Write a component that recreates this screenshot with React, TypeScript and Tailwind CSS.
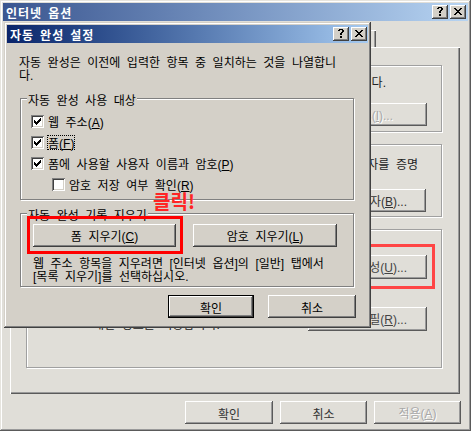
import React from "react";

const HANGUL = /[\u1100-\u11FF\u3130-\u318F\uAC00-\uD7A3]/;
type Seg = { t: string; kind: "h" | "s" | "l"; u: boolean };

function parse(text: string): Seg[] {
  const segs: Seg[] = [];
  let under = false;
  for (const ch of Array.from(text)) {
    if (ch === "&" && !under) {
      under = true;
      continue;
    }
    const kind: Seg["kind"] = ch === " " ? "s" : HANGUL.test(ch) ? "h" : "l";
    const last = segs[segs.length - 1];
    if (!under && last && last.kind === kind && !last.u) last.t += ch;
    else segs.push({ t: ch, kind, u: under });
    under = false;
  }
  return segs;
}

function KT({ s, bold = false }: { s: string; bold?: boolean }) {
  return (
    <span className="whitespace-nowrap">
      {parse(s).map((g, i) => {
        if (g.kind === "s")
          return <span key={i} className={bold ? "inline-block w-[6px]" : "inline-block w-[6.5px]"} />;
        const u = g.u ? " underline underline-offset-[1px] decoration-1" : "";
        if (g.kind === "h")
          return (
            <span
              key={i}
              className={(bold ? "font-bold text-[12px] tracking-[1px]" : "text-[12px]") + " font-['Noto_Sans_CJK_KR']" + u}
            >
              {g.t}
            </span>
          );
        return (
          <span key={i} className={(bold ? "font-bold " : "") + "text-[12px] font-['Liberation_Sans']" + u}>
            {g.t}
          </span>
        );
      })}
    </span>
  );
}

function Bits({ rows, color = "#000", className = "" }: { rows: string[]; color?: string; className?: string }) {
  const w = rows[0].length;
  const h = rows.length;
  const rects: React.ReactElement[] = [];
  rows.forEach((r, y) =>
    Array.from(r).forEach((c, x) => {
      if (c === "#") rects.push(<rect key={`${x}-${y}`} x={x} y={y} width={1} height={1} />);
    })
  );
  return (
    <svg width={w} height={h} viewBox={`0 0 ${w} ${h}`} fill={color} shapeRendering="crispEdges" className={className}>
      {rects}
    </svg>
  );
}

const CLOSE = ["##....##", ".##..##.", "..####..", "...##...", "..####..", ".##..##.", "##....##"];
const HELP = [".####.", "##..##", "....##", "...##.", "..##..", "..##..", "......", "..##..", "..##.."];
const CHECK = ["......#", ".....##", "#...###", "##.###.", "#####..", ".###...", "..#...."];

function CapBtn({ kind }: { kind: "help" | "close" }) {
  return (
    <div className="w-[16px] h-[14px] bg-[#d4d0c8] shadow-[inset_-1px_-1px_0_#404040,inset_1px_1px_0_#ffffff,inset_-2px_-2px_0_#808080] flex items-start">
      {kind === "close" ? (
        <Bits rows={CLOSE} className="block ml-[4px] mt-[3px]" />
      ) : (
        <Bits rows={HELP} className="block ml-[5px] mt-[2px]" />
      )}
    </div>
  );
}

function Check({ checked }: { checked: boolean }) {
  return (
    <div className="w-[13px] h-[13px] shrink-0 bg-white shadow-[inset_1px_1px_0_#808080,inset_-1px_-1px_0_#ffffff,inset_2px_2px_0_#404040,inset_-2px_-2px_0_#d4d0c8] flex items-start">
      {checked && <Bits rows={CHECK} className="block ml-[3px] mt-[3px]" />}
    </div>
  );
}

function Line({ s, className = "" }: { s: string; className?: string }) {
  return (
    <div className={"h-[13px] leading-[13px] whitespace-nowrap " + className}>
      <KT s={s} />
    </div>
  );
}

export default function App() {
  return (
    <div className="w-[471px] h-[431px] overflow-hidden font-['Noto_Sans_CJK_KR',sans-serif] text-black">
      {/* Background window: 인터넷 옵션 */}
      <div className="relative w-[471px] h-[431px] bg-[#e0ded8] p-[3px] flex flex-col shadow-[inset_-1px_-1px_0_#5a5a5a,inset_1px_1px_0_#e6e4de,inset_-2px_-2px_0_#9a9a9a,inset_2px_2px_0_#ffffff]">
        <div className="h-[18px] shrink-0 flex items-center pl-[3px] pr-[2px] bg-linear-to-r from-[#3b5690] to-[#b7d4f2]">
          <span className="text-white leading-[18px]">
            <KT s="인터넷 옵션" bold />
          </span>
          <div className="ml-auto flex gap-[2px]">
            <CapBtn kind="help" />
            <CapBtn kind="close" />
          </div>
        </div>

        {/* tab row */}
        <div className="h-[26px] shrink-0 flex items-start">
          <div className="ml-[297px] mt-[9px] w-[76px] h-[17px] shadow-[inset_1px_1px_0_#ffffff,inset_-1px_0_0_#5a5a5a,inset_-2px_0_0_#9a9a9a]" />
        </div>

        {/* tab page */}
        <div className="ml-[7px] w-[450px] h-[347px] shrink-0 pt-[18px] pl-[16px] flex flex-col shadow-[inset_1px_1px_0_#ffffff,inset_-1px_-1px_0_#5a5a5a,inset_-2px_-2px_0_#9a9a9a]">
          {/* G1 */}
          <div className="w-[416px] h-[67px] border border-[#a0a0a0] shadow-[inset_1px_1px_0_#ffffff,1px_1px_0_#ffffff] flex flex-col items-end">
            <Line s="제어할 수 있습니다." className="mt-[8px] mr-[55px] text-[#222]" />
            <div className="mt-[16px] mr-[14px] w-[119px] h-[23px] flex items-center justify-end pr-[34px] shadow-[inset_-1px_-1px_0_#5a5a5a,inset_1px_1px_0_#ffffff,inset_-2px_-2px_0_#9a9a9a] text-[#a8a8a8] [text-shadow:1px_1px_0_#ffffff] leading-[13px]">
              <KT s="설정(&I)..." />
            </div>
          </div>
          {/* G2 */}
          <div className="mt-[12px] w-[416px] h-[73px] border border-[#a0a0a0] shadow-[inset_1px_1px_0_#ffffff,1px_1px_0_#ffffff] flex flex-col items-end">
            <Line s="게시자를 증명" className="mt-[11px] mr-[23px] text-[#222]" />
            <div className="mt-[20px] mr-[15px] w-[119px] h-[23px] flex items-center justify-end pr-[19px] shadow-[inset_-1px_-1px_0_#5a5a5a,inset_1px_1px_0_#ffffff,inset_-2px_-2px_0_#9a9a9a] text-[#333] leading-[13px]">
              <KT s="게시자(&B)..." />
            </div>
          </div>
          {/* G3 */}
          <div className="mt-[12px] w-[416px] h-[139px] border border-[#a0a0a0] shadow-[inset_1px_1px_0_#ffffff,1px_1px_0_#ffffff] flex flex-col items-end">
            <div className="mt-[25px] mr-[14px] w-[119px] h-[24px] flex items-center justify-end pr-[20px] shadow-[inset_-1px_-1px_0_#5a5a5a,inset_1px_1px_0_#ffffff,inset_-2px_-2px_0_#9a9a9a] text-[#444] leading-[13px]">
              <KT s="완성(&U)..." />
            </div>
            <div className="mt-[28px] w-full flex items-end">
              <Line s="개인 정보를 저장합니다." className="ml-[66px] mb-[2px] text-[#222]" />
              <div className="ml-auto mr-[14px] w-[119px] h-[24px] flex items-center justify-end pr-[20px] shadow-[inset_-1px_-1px_0_#5a5a5a,inset_1px_1px_0_#ffffff,inset_-2px_-2px_0_#9a9a9a] text-[#444] leading-[13px]">
                <KT s="프로필(&R)..." />
              </div>
            </div>
          </div>
        </div>

        {/* bottom buttons */}
        <div className="mt-[7px] pr-[7px] flex justify-end gap-[7px]">
          <div className="w-[88px] h-[23px] flex items-center justify-center shadow-[inset_-1px_-1px_0_#5a5a5a,inset_1px_1px_0_#ffffff,inset_-2px_-2px_0_#9a9a9a] text-[#333] leading-[13px]">
            <KT s="확인" />
          </div>
          <div className="w-[87px] h-[23px] flex items-center justify-center shadow-[inset_-1px_-1px_0_#5a5a5a,inset_1px_1px_0_#ffffff,inset_-2px_-2px_0_#9a9a9a] text-[#333] leading-[13px]">
            <KT s="취소" />
          </div>
          <div className="w-[87px] h-[23px] flex items-center justify-center shadow-[inset_-1px_-1px_0_#5a5a5a,inset_1px_1px_0_#ffffff,inset_-2px_-2px_0_#9a9a9a] text-[#a8a8a8] [text-shadow:1px_1px_0_#ffffff] leading-[13px]">
            <KT s="적용(&A)" />
          </div>
        </div>

        {/* annotation on background window */}
        <div className="absolute left-[340px] top-[244px] w-[95px] h-[45px] border-[3px] border-[#ff4545]" />

        {/* Dialog: 자동 완성 설정 */}
        <div className="absolute left-[4px] top-[22px] z-10 w-[367px] h-[306px] bg-[#d4d0c8] p-[3px] flex flex-col shadow-[inset_-1px_-1px_0_#404040,inset_1px_1px_0_#d4d0c8,inset_-2px_-2px_0_#808080,inset_2px_2px_0_#ffffff]">
          <div className="h-[18px] shrink-0 flex items-center pl-[3px] pr-[1px] bg-linear-to-r from-[#0a246a] to-[#a6caf0]">
            <span className="text-white leading-[18px]">
              <KT s="자동 완성 설정" bold />
            </span>
            <div className="ml-auto flex gap-[2px]">
              <CapBtn kind="help" />
              <CapBtn kind="close" />
            </div>
          </div>

          <div className="mt-[11px] pl-[12px]">
            <Line s="자동 완성은 이전에 입력한 항목 중 일치하는 것을 나열합니" />
            <Line s="다." />
          </div>

          {/* group 1 */}
          <div className="relative mt-[18px] ml-[13px] w-[334px] h-[102px] shrink-0 border border-[#808080] shadow-[inset_1px_1px_0_#ffffff,1px_1px_0_#ffffff] pt-[16px] pl-[10px] flex flex-col gap-[8px]">
            <span className="absolute left-[6px] top-[-7px] px-[1px] bg-[#d4d0c8] leading-[13px]">
              <KT s="자동 완성 사용 대상" />
            </span>
            <div className="h-[13px] flex items-center gap-[4px] leading-[13px]">
              <Check checked />
              <KT s="웹 주소(&A)" />
            </div>
            <div className="h-[13px] flex items-center gap-[3px] leading-[13px]">
              <Check checked />
              <span className="h-[15px] flex items-center border border-dotted border-black">
                <KT s="폼(&F)" />
              </span>
            </div>
            <div className="h-[13px] flex items-center gap-[4px] leading-[13px]">
              <Check checked />
              <KT s="폼에 사용할 사용자 이름과 암호(&P)" />
            </div>
            <div className="h-[13px] ml-[21px] flex items-center gap-[4px] leading-[13px]">
              <Check checked={false} />
              <KT s="암호 저장 여부 확인(&R)" />
            </div>
          </div>

          {/* group 2 */}
          <div className="relative mt-[13px] ml-[13px] w-[334px] h-[74px] shrink-0 border border-[#808080] shadow-[inset_1px_1px_0_#ffffff,1px_1px_0_#ffffff] pt-[10px] pl-[12px] flex flex-col">
            <span className="absolute left-[6px] top-[-7px] px-[1px] bg-[#d4d0c8] leading-[13px]">
              <KT s="자동 완성 기록 지우기" />
            </span>
            <div className="flex gap-[17px]">
              <div className="w-[143px] h-[23px] flex items-center justify-center leading-[13px] shadow-[inset_-1px_-1px_0_#404040,inset_1px_1px_0_#ffffff,inset_-2px_-2px_0_#808080]">
                <KT s="폼 지우기(&C)" />
              </div>
              <div className="w-[144px] h-[23px] flex items-center justify-center leading-[13px] shadow-[inset_-1px_-1px_0_#404040,inset_1px_1px_0_#ffffff,inset_-2px_-2px_0_#808080]">
                <KT s="암호 지우기(&L)" />
              </div>
            </div>
            <div className="mt-[8px]">
              <Line s="웹 주소 항목을 지우려면 [인터넷 옵션]의 [일반] 탭에서" />
              <Line s="[목록 지우기]를 선택하십시오." />
            </div>
            {/* annotations */}
            <div className="absolute left-[6px] top-[2px] w-[156px] h-[38px] border-[3px] border-[#ff0000]" />
            <span className="absolute left-[132px] top-[-22px] h-[17px] text-[19px] leading-[17px] font-bold text-[#ff2424] font-['Noto_Sans_CJK_KR']">
              클릭!
            </span>
          </div>

          {/* buttons */}
          <div className="mt-[8px] pr-[12px] flex justify-end gap-[14px]">
            <div className="w-[86px] h-[23px] border border-black flex items-center justify-center leading-[13px] shadow-[inset_-1px_-1px_0_#404040,inset_1px_1px_0_#ffffff,inset_-2px_-2px_0_#808080]">
              <KT s="확인" />
            </div>
            <div className="w-[88px] h-[23px] flex items-center justify-center leading-[13px] shadow-[inset_-1px_-1px_0_#404040,inset_1px_1px_0_#ffffff,inset_-2px_-2px_0_#808080]">
              <KT s="취소" />
            </div>
          </div>
        </div>
      </div>
    </div>
  );
}
